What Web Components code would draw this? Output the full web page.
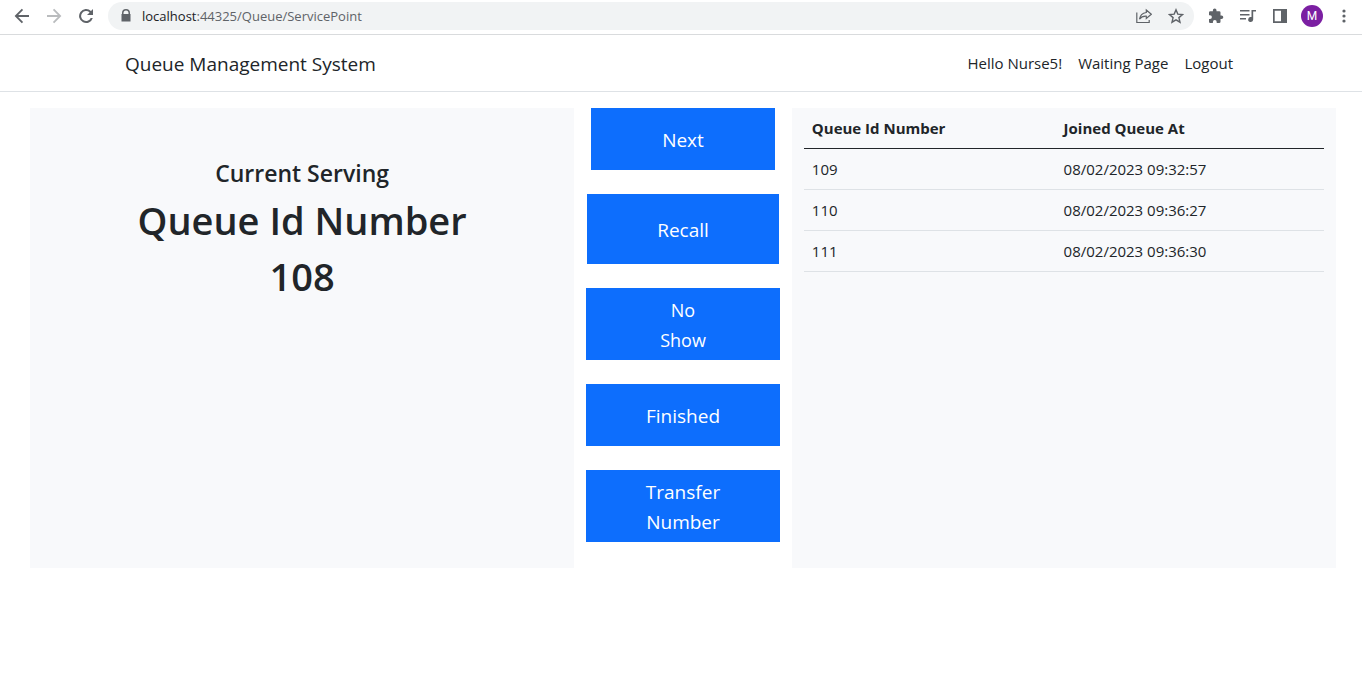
<!DOCTYPE html>
<html lang="en">
<head>
<meta charset="utf-8">
<meta name="viewport" content="width=device-width, initial-scale=1">
<title>Queue Management System</title>
<style>
  body {
    margin: 0;
    background: #fff;
    color: #212529;
    font: 15px/24px "Open Sans", "Noto Sans", sans-serif;
  }
</style>
</head>
<body>
<browser-bar></browser-bar>
<site-header>
  Queue Management System
  <nav-link slot="links" href="#hello">Hello Nurse5!</nav-link>
  <nav-link slot="links" href="#waiting">Waiting Page</nav-link>
  <nav-link slot="links" href="#logout">Logout</nav-link>
</site-header>
<service-point>
  <current-serving slot="serving" number="108"></current-serving>
  <action-button slot="actions" class="next">Next</action-button>
  <action-button slot="actions" class="recall">Recall</action-button>
  <action-button slot="actions" class="tall compact">No<br>Show</action-button>
  <action-button slot="actions">Finished</action-button>
  <action-button slot="actions" class="tall">Transfer<br>Number</action-button>
  <waiting-list slot="waiting"></waiting-list>
</service-point>

<script>
class BaseElement extends HTMLElement {
  render(html) {
    const template = document.createElement('template');
    template.innerHTML = html;
    this.attachShadow({ mode: 'open' }).append(template.content.cloneNode(true));
  }
}

customElements.define('browser-bar', class extends BaseElement {
  constructor() {
    super();
    this.render(`
      <style>
        :host { display: flex; align-items: center; box-sizing: border-box; padding: 0 6px 2px 10px; border-bottom: 1px solid #d9dbdd; height: 35px; color: #5f6368; }
        button { display: grid; place-items: center; width: 24px; height: 24px; padding: 0; border: 0; background: none; color: inherit; flex: none; }
        svg { display: block; width: 16px; height: 16px; fill: currentColor; }
        .nav { display: flex; gap: 8px; }
        .forward { color: #babcbe; }
        .address { flex: 1; display: flex; align-items: center; height: 28px; margin: 0 10px; padding: 0 6px 0 10px; border-radius: 14px; background: #f1f3f4; box-sizing: border-box; gap: 8px; }
        .address svg.lock { width: 16px; height: 16px; flex: none; }
        .url { flex: 1; font-size: 13px; line-height: 20px; }
        .host { color: #202124; }
        .tools { display: flex; gap: 8px; }
        .profile { border-radius: 50%; background: #7b1fa2; color: #fff; font: 12px/22px Roboto, sans-serif; width: 22px; height: 22px; margin: 1px; }
      </style>
      <div class="nav">
        <button aria-label="Back"><svg viewBox="0 0 16 16"><path d="M15 7H4.2l4.9-4.9L7.8.8.6 8l7.2 7.2 1.3-1.3L4.2 9H15z"/></svg></button>
        <button class="forward" aria-label="Forward"><svg viewBox="0 0 16 16"><path d="M1 7h10.8L6.9 2.1 8.2.8 15.4 8l-7.2 7.2-1.3-1.3L11.800 9H1z"/></svg></button>
        <button aria-label="Reload"><svg viewBox="0 0 16 16"><path d="M13 3A7 7 0 1 0 14.800 10h-2.100A5 5 0 1 1 11.600 4.400L9 7h6V1z"/></svg></button>
      </div>
      <div class="address">
        <svg class="lock" viewBox="0 0 16 16"><path fill-rule="evenodd" d="M4 6V5a4 4 0 0 1 8 0v1h.500v7.500h-9V6zm1.500 0h5V5a2.500 2.500 0 0 0-5 0z"/></svg>
        <span class="url"><span class="host">localhost</span>:44325/Queue/ServicePoint</span>
        <div class="tools">
          <button aria-label="Share"><svg viewBox="0 0 16 16" style="fill:none;stroke:currentColor;stroke-width:1.200"><path d="M.8 4.500v10h12.400V12M10.300 2l5 4.300-5 4.200V8.200C7 8 5 9 3.500 11.200 4 7.500 6.300 5 10.300 4.500z"/></svg></button>
          <button aria-label="Bookmark"><svg viewBox="0 0 16 16" style="fill:none;stroke:currentColor;stroke-width:1.400"><path d="M8 1.800l1.800 4.300 4.700.4-3.600 3.100 1.100 4.600L8 11.800l-4 2.400 1.100-4.600-3.600-3.100 4.700-.4z"/></svg></button>
        </div>
      </div>
      <div class="tools">
        <button aria-label="Extensions"><svg viewBox="0 0 16 16"><path d="M13.500 7.500h-1V4.600A1.300 1.300 0 0 0 11.200 3.300H8.500v-1a1.800 1.800 0 0 0-3.600 0v1H2.300A1.300 1.300 0 0 0 1 4.600v2.600h1a1.900 1.900 0 0 1 0 3.800H1v2.700A1.300 1.300 0 0 0 2.300 15h2.600v-1a1.900 1.900 0 0 1 3.800 0v1h2.500a1.300 1.300 0 0 0 1.300-1.300v-2.600h1a1.800 1.800 0 0 0 0-3.600z"/></svg></button>
        <button aria-label="Media"><svg viewBox="0 0 16 16"><path d="M0 2h9.500v1.500H0zM0 6h9.500v1.500H0zM0 10h6v1.500H0zM11.500 2H16v1.600h-2.800V11.500a2.500 2.500 0 1 1-1.700-2.400z"/></svg></button>
        <button aria-label="Side panel"><svg viewBox="0 0 16 16"><path fill-rule="evenodd" d="M1 1h14v14H1zm1.700 1.700v10.600H9V2.700z"/></svg></button>
        <button class="profile" aria-label="Profile">M</button>
        <button aria-label="Menu"><svg viewBox="0 0 16 16"><circle cx="8" cy="3" r="1.600"/><circle cx="8" cy="8" r="1.600"/><circle cx="8" cy="13" r="1.600"/></svg></button>
      </div>`);
  }
});

customElements.define('nav-link', class extends BaseElement {
  constructor() {
    super();
    this.render(`
      <style>
        :host { display: block; }
        a { display: block; padding: 8px; color: #212529; text-decoration: none; white-space: nowrap; }
      </style>
      <a><slot></slot></a>`);
    this.shadowRoot.querySelector('a').href = this.getAttribute('href');
  }
});

customElements.define('site-header', class extends BaseElement {
  constructor() {
    super();
    this.render(`
      <style>
        :host { display: block; padding: 8px 0; border-bottom: 1px solid #dee2e6; }
        .container { display: flex; align-items: center; justify-content: space-between; max-width: 1140px; box-sizing: border-box; margin: 0 auto; padding: 0 10px 0 14px; }
        .brand { padding-top: 2px; color: #212529; font-size: 19px; line-height: 30px; text-decoration: none; white-space: nowrap; }
        nav { display: flex; }
      </style>
      <div class="container">
        <a class="brand" href="#home"><slot></slot></a>
        <nav><slot name="links"></slot></nav>
      </div>`);
  }
});

customElements.define('service-point', class extends BaseElement {
  constructor() {
    super();
    this.render(`
      <style>
        :host { display: block; padding: 16px 26px 0 30px; }
        main { display: grid; grid-template-columns: 5fr 2fr 5fr; min-height: 460px; }
        section { min-width: 0; box-sizing: border-box; padding: 0 12px; }
        .panel { background: #f8f9fb; }
        .actions { display: flex; flex-direction: column; align-items: center; gap: 24px; }
      </style>
      <main>
        <section class="panel"><slot name="serving"></slot></section>
        <section class="actions"><slot name="actions"></slot></section>
        <section class="panel"><slot name="waiting"></slot></section>
      </main>`);
  }
});

customElements.define('current-serving', class extends BaseElement {
  constructor() {
    super();
    this.render(`
      <style>
        :host { display: block; padding-top: 48px; text-align: center; }
        h1, h2 { margin: 0; font-weight: 600; }
        h2 { margin-bottom: 6px; font-size: 23px; line-height: 34px; }
        h1 { margin-bottom: 8px; font-size: 38px; line-height: 48px; }
      </style>
      <h2>Current Serving</h2>
      <h1>Queue Id Number</h1>
      <h1 class="number"></h1>`);
    this.shadowRoot.querySelector('.number').textContent = this.getAttribute('number');
  }
});

customElements.define('action-button', class extends BaseElement {
  constructor() {
    super();
    this.render(`
      <style>
        :host { display: block; width: 100%; }
        :host(.next) { width: 184px; }
        :host(.recall) { width: 192px; }
        button { display: block; width: 100%; min-height: 62px; padding: 6px 16px 4px; border: 0; background: #0d6efd; color: #fff; font: 19px/30px "Open Sans", "Noto Sans", sans-serif; }
        :host(.recall) button { min-height: 70px; }
        :host(.tall) button { min-height: 72px; }
        :host(.compact) button { font-size: 18px; }
      </style>
      <button type="button"><slot></slot></button>`);
  }
});

customElements.define('waiting-list', class extends BaseElement {
  constructor() {
    super();
    const rows = [
      ['109', '08/02/2023 09:32:57'],
      ['110', '08/02/2023 09:36:27'],
      ['111', '08/02/2023 09:36:30']
    ];
    this.render(`
      <style>
        :host { display: block; }
        table { width: 100%; table-layout: fixed; border-collapse: separate; border-spacing: 0; }
        .id { width: 48.4%; }
        th, td { padding: 8px; text-align: left; border-bottom: 1px solid #dee2e6; }
        th { border-bottom-color: #212529; font-weight: 700; }
      </style>
      <table>
        <colgroup><col class="id"><col></colgroup>
        <thead><tr><th scope="col">Queue Id Number</th><th scope="col">Joined Queue At</th></tr></thead>
        <tbody>${rows.map(([id, at]) => `<tr><td>${id}</td><td>${at}</td></tr>`).join('')}</tbody>
      </table>`);
  }
});
</script>
</body>
</html>
